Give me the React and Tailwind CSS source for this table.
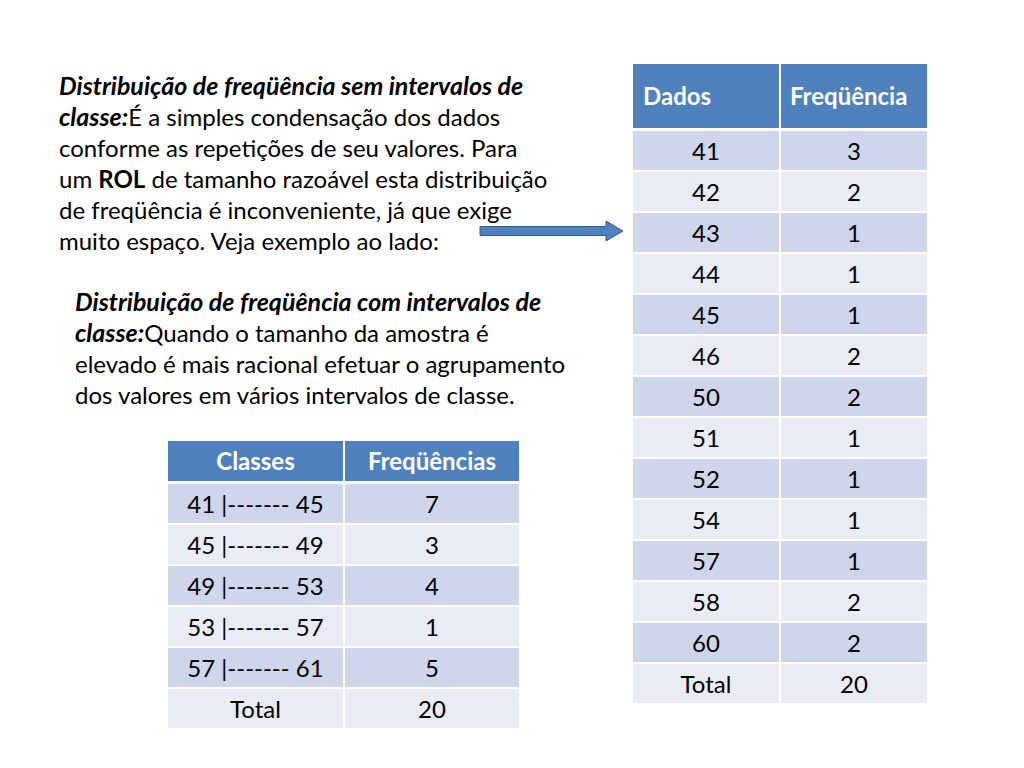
import React from 'react'

const dados = [
  ['41', '3'],
  ['42', '2'],
  ['43', '1'],
  ['44', '1'],
  ['45', '1'],
  ['46', '2'],
  ['50', '2'],
  ['51', '1'],
  ['52', '1'],
  ['54', '1'],
  ['57', '1'],
  ['58', '2'],
  ['60', '2'],
  ['Total', '20'],
]

const classes = [
  ['41 |------- 45', '7'],
  ['45 |------- 49', '3'],
  ['49 |------- 53', '4'],
  ['53 |------- 57', '1'],
  ['57 |------- 61', '5'],
  ['Total', '20'],
]

// PowerPoint "medium style 2" banding: odd rows darker, even rows lighter
const band = (i) => (i % 2 === 0 ? 'bg-[#cfd5ea]' : 'bg-[#e9ebf5]')

function Arrow() {
  return (
    <svg width="146" height="24" viewBox="0 0 146 24" className="absolute left-[420px] top-[-6px]">
      <path
        d="M1 7.5 H127 V2 L144 12 L127 22 V16.5 H1 Z"
        fill="#4f81bd"
        stroke="#385d8a"
        strokeWidth="1"
      />
    </svg>
  )
}

function Lead({ children }) {
  return <b className="italic text-[25px]">{children}</b>
}

function DadosTable() {
  return (
    <div className="w-[294px] flex flex-col">
      <div className="grid grid-cols-[146px_146px] gap-x-[2px] h-[64px] mb-[3px]">
        <div className="bg-[#4f81bd] flex items-center pl-[10px] text-white font-bold">Dados</div>
        <div className="bg-[#4f81bd] flex items-center pl-[9px] text-white font-bold">Freqüência</div>
      </div>
      <div className="flex flex-col gap-[2px]">
        {dados.map(([d, f], i) => (
          <div key={d} className="grid grid-cols-[146px_146px] gap-x-[2px] h-[39px]">
            <div className={`${band(i)} flex items-center justify-center`}>{d}</div>
            <div className={`${band(i)} flex items-center justify-center`}>{f}</div>
          </div>
        ))}
      </div>
    </div>
  )
}

function ClassesTable() {
  return (
    <div className="w-[351px] flex flex-col">
      <div className="grid grid-cols-[175px_174px] gap-x-[2px] h-[40px] mb-[3px]">
        <div className="bg-[#4f81bd] flex items-center justify-center text-white font-bold">Classes</div>
        <div className="bg-[#4f81bd] flex items-center justify-center text-white font-bold">Freqüências</div>
      </div>
      <div className="flex flex-col gap-[2px]">
        {classes.map(([c, f], i) => (
          <div key={c} className="grid grid-cols-[175px_174px] gap-x-[2px] h-[39px]">
            <div className={`${band(i)} flex items-center justify-center`}>{c}</div>
            <div className={`${band(i)} flex items-center justify-center`}>{f}</div>
          </div>
        ))}
      </div>
    </div>
  )
}

export default function App() {
  return (
    <div className="w-[1024px] h-[768px] bg-white text-black flex font-['Lato',sans-serif] text-[24px]">
      <div className="w-[632px] flex flex-col">
        <p className="mt-[70px] ml-[59px] leading-[31px] whitespace-nowrap">
          <Lead>Distribuição de freqüência sem intervalos de</Lead>
          <br />
          <Lead>classe:</Lead>É a simples condensação dos dados
          <br />
          conforme as repetições de seu valores. Para
          <br />
          um <b>ROL</b> de tamanho razoável esta distribuição
          <br />
          de freqüência é inconveniente, já que exige
          <br />
          <span className="relative inline-block">
            muito espaço. Veja exemplo ao lado:
            <Arrow />
          </span>
        </p>
        <p className="mt-[30px] ml-[75px] leading-[31px] whitespace-nowrap">
          <Lead>Distribuição de freqüência com intervalos de</Lead>
          <br />
          <Lead>classe:</Lead>Quando o tamanho da amostra é
          <br />
          elevado é mais racional efetuar o agrupamento
          <br />
          dos valores em vários intervalos de classe.
        </p>
        <div className="mt-[31px] ml-[168px]">
          <ClassesTable />
        </div>
      </div>
      <div className="pt-[64px] pl-[1px]">
        <DadosTable />
      </div>
    </div>
  )
}
